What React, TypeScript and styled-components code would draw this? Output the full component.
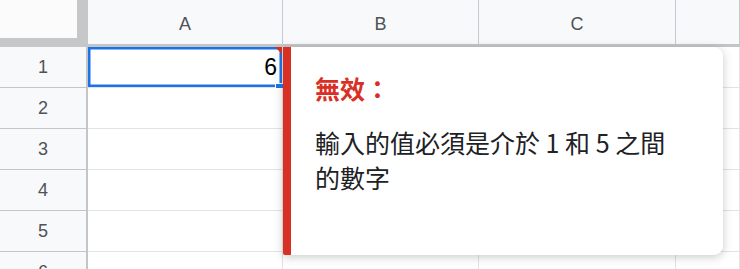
import styled, { createGlobalStyle } from 'styled-components';

const GlobalStyle = createGlobalStyle`
  html, body {
    margin: 0;
    padding: 0;
    background: #fff;
    overflow: hidden;
  }
  * {
    box-sizing: border-box;
  }
`;

const columns = ['A', 'B', 'C', ''];
const rows = [1, 2, 3, 4, 5, 6];

const App = () => {
  return (
    <>
      <GlobalStyle />
      <Sheet>
        {/* 좌상단 코너 */}
        <Corner>
          <CornerInner />
        </Corner>
        {columns.map((col, i) => (
          <ColHead key={`c${i}`}>{col}</ColHead>
        ))}

        {rows.map((row) => (
          <Row key={row} row={row} />
        ))}

        {/* 데이터 검증 팝업 */}
        <Popup>
          <PopupTitle>無效：</PopupTitle>
          <PopupBody>輸入的值必須是介於 1 和 5 之間的數字</PopupBody>
        </Popup>
      </Sheet>
    </>
  );
};

const Row = ({ row }: { row: number }) => (
  <>
    <RowHead>{row}</RowHead>
    {columns.map((_, i) => {
      const selected = row === 1 && i === 0;
      return (
        <Cell key={i} $selected={selected}>
          {selected && (
            <>
              <CellValue>6</CellValue>
              <ErrorFlag />
              <FillHandle />
            </>
          )}
        </Cell>
      );
    })}
  </>
);

const Sheet = styled.div`
  position: relative;
  width: 740px;
  height: 269px;
  overflow: hidden;
  display: grid;
  grid-template-columns: 88px 195px 196px 197px 1fr;
  grid-template-rows: 47px repeat(6, 41px);
  font-family: 'Liberation Sans', Arial, sans-serif;
`;

const Corner = styled.div`
  background: #c6c7c8;
  padding: 0 11px 9px 0;
`;

const CornerInner = styled.div`
  width: 100%;
  height: 100%;
  background: #fbfbfc;
`;

const ColHead = styled.div`
  display: flex;
  align-items: center;
  justify-content: center;
  padding-top: 4px;
  background: #f8f9fa;
  border-right: 1px solid #c7c9cc;
  border-bottom: 3px solid #c4c5c7;
  color: #4f5256;
  font-family: 'Liberation Sans', Arial, sans-serif;
  font-size: 18px;
`;

const RowHead = styled.div`
  display: flex;
  align-items: center;
  justify-content: center;
  background: #f8f9fa;
  border-right: 2px solid #c4c5c7;
  border-bottom: 1px solid #c4c5c7;
  color: #4f5256;
  font-family: 'Liberation Sans', Arial, sans-serif;
  font-size: 18px;
`;

interface CellProps {
  $selected: boolean;
}

const Cell = styled.div<CellProps>`
  position: relative;
  display: flex;
  align-items: center;
  justify-content: flex-end;
  padding-right: 5px;
  background: #fff;
  border-right: 1px solid #e2e3e3;
  border-bottom: 1px solid #e2e3e3;
  ${({ $selected }) =>
    $selected &&
    `
    box-shadow: inset 0 0 0 2.5px #1a73e8;
  `}
`;

const CellValue = styled.span`
  font-family: 'Liberation Sans', Arial, sans-serif;
  font-size: 23px;
  color: #000;
`;

const ErrorFlag = styled.span`
  position: absolute;
  top: 0;
  right: 0;
  width: 0;
  height: 0;
  border-top: 7px solid #d93025;
  border-left: 7px solid transparent;
`;

const FillHandle = styled.span`
  position: absolute;
  right: -1px;
  bottom: -5px;
  width: 8px;
  height: 9px;
  background: #1a73e8;
  border: 1px solid #fff;
  border-right: 0;
`;

const Popup = styled.div`
  position: absolute;
  left: 283px;
  top: 47px;
  width: 440px;
  height: 208px;
  padding: 24px 24px 0 24px;
  background: #fff;
  border-left: 8px solid #d93025;
  border-radius: 0 9px 9px 2px;
  box-shadow: 0 2px 10px rgba(60, 64, 67, 0.28);
  font-family: 'Noto Sans CJK TC', 'Noto Sans', sans-serif;
`;

const PopupTitle = styled.div`
  font-size: 25px;
  line-height: 35px;
  font-weight: 700;
  color: #d93025;
`;

const PopupBody = styled.div`
  margin-top: 19px;
  max-width: 372px;
  font-size: 25px;
  line-height: 35px;
  color: #202124;
`;

export default App;
